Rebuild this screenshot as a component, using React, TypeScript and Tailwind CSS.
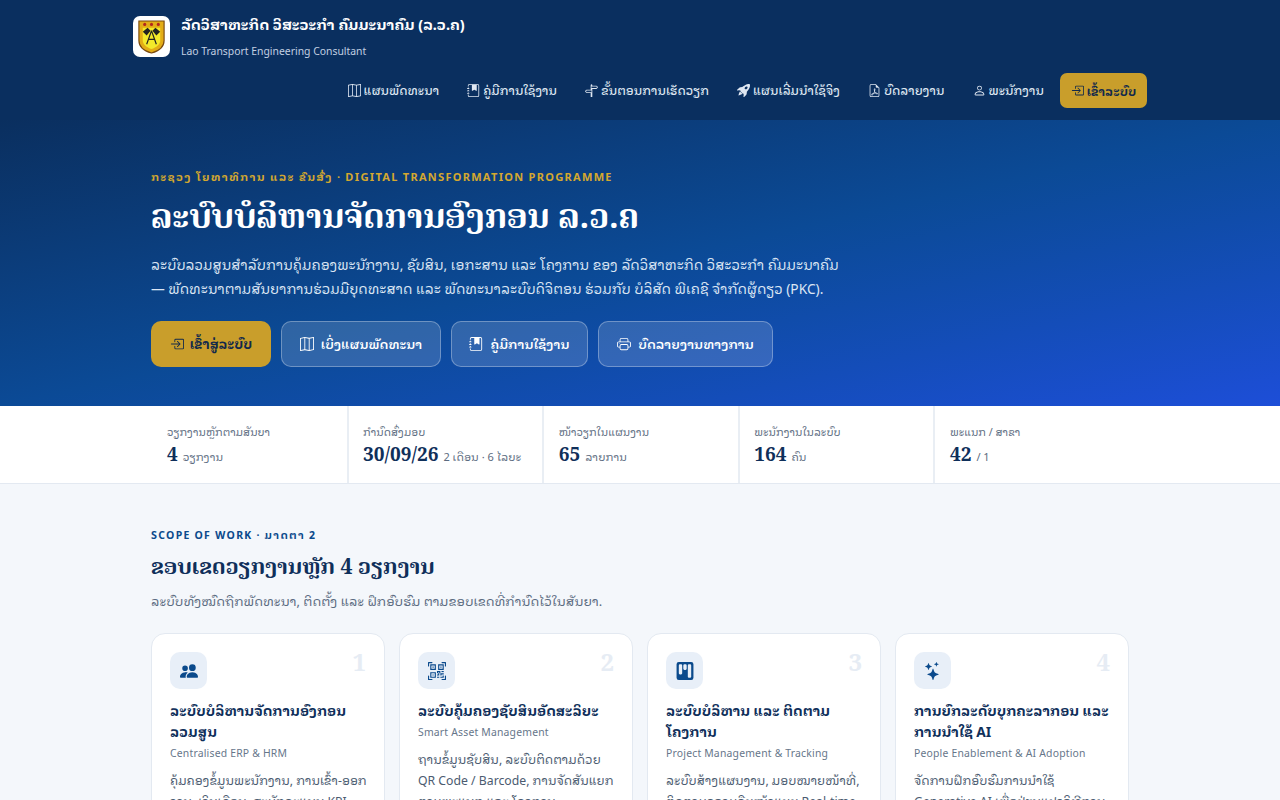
import React from "react";
import {
  BsBoxArrowInRight,
  BsFileEarmarkPdf,
  BsJournalBookmarkFill,
  BsKanbanFill,
  BsMap,
  BsPeopleFill,
  BsPerson,
  BsPrinter,
  BsQrCodeScan,
  BsRocketTakeoffFill,
  BsSignpostSplit,
  BsStars,
} from "react-icons/bs";

const navLinks = [
  { label: "ແຜນພັດທະນາ", icon: BsMap },
  { label: "ຄູ່ມືການໃຊ້ງານ", icon: BsJournalBookmarkFill },
  { label: "ຂັ້ນຕອນການເຮັດວຽກ", icon: BsSignpostSplit },
  { label: "ແຜນເລີ່ມນຳໃຊ້ຈິງ", icon: BsRocketTakeoffFill },
  { label: "ບົດລາຍງານ", icon: BsFileEarmarkPdf },
  { label: "ພະນັກງານ", icon: BsPerson },
];

const heroLinks = [
  { label: "ເບິ່ງແຜນພັດທະນາ", icon: BsMap, width: "w-[160px]" },
  { label: "ຄູ່ມືການໃຊ້ງານ", icon: BsJournalBookmarkFill, width: "w-[137px]" },
  { label: "ບົດລາຍງານທາງການ", icon: BsPrinter, width: "w-[175px]" },
];

const stats = [
  { label: "ວຽກງານຫຼັກຕາມສັນຍາ", value: "4", unit: "ວຽກງານ" },
  { label: "ກຳນົດສົ່ງມອບ", value: "30/09/26", unit: "2 ເດືອນ · 6 ໄລຍະ" },
  { label: "ໜ້າວຽກໃນແຜນງານ", value: "65", unit: "ລາຍການ" },
  { label: "ພະນັກງານໃນລະບົບ", value: "164", unit: "ຄົນ" },
  { label: "ພະແນກ / ສາຂາ", value: "42", unit: "/ 1" },
];

const cards = [
  {
    n: "1",
    icon: BsPeopleFill,
    title: "ລະບົບບໍລິຫານຈັດການອົງກອນ ລວມສູນ",
    sub: "Centralised ERP & HRM",
    text: "ຄຸ້ມຄອງຂໍ້ມູນພະນັກງານ, ການເຂົ້າ-ອອກ\u200Bງານ, ເງິນເດືອນ, ສະມັກຄະແນນ KPI ແລະ ການອະນຸມັດເອກະສານ",
  },
  {
    n: "2",
    icon: BsQrCodeScan,
    title: "ລະບົບຄຸ້ມຄອງຊັບສິນອັດສະລິຍະ",
    sub: "Smart Asset Management",
    text: "ຖານຂໍ້ມູນຊັບສິນ, ລະບົບຕິດຕາມດ້ວຍ QR Code / Barcode, ການຈັດສັນແຍກຕາມພະແນກ ແລະ ໂຄງການ",
  },
  {
    n: "3",
    icon: BsKanbanFill,
    title: "ລະບົບບໍລິຫານ ແລະ ຕິດຕາມ ໂຄງການ",
    sub: "Project Management & Tracking",
    text: "ລະບົບສ້າງແຜນງານ, ມອບໝາຍໜ້າທີ່, ຕິດຕາມຄວາມຄືບໜ້າແບບ Real-time ແລະ ລາຍງານຜົນ",
  },
  {
    n: "4",
    icon: BsStars,
    title: "ການຍົກລະດັບບຸກຄະລາກອນ ແລະ ການນຳໃຊ້ AI",
    sub: "People Enablement & AI Adoption",
    text: "ຈັດການຝຶກອົບຮົມການນຳໃຊ້ Generative AI ເພື່ອປ່ຽນແປງວິທີການເຮັດວຽກຂອງພະນັກງານ",
  },
];

function Logo() {
  return (
    <div className="flex h-[41px] w-[37px] shrink-0 items-center justify-center rounded-[7px] bg-white">
      <svg viewBox="0 0 32 36" className="h-[35px] w-[31px]">
        <path d="M3 2h26v20c0 7-6 11-13 13C9 33 3 29 3 22z" fill="#e3ad16" stroke="#7a4a10" strokeWidth="1.2" />
        <path d="M7 9h18v13c0 4-4 7-9 9-5-2-9-5-9-9z" fill="#f3e92a" />
        <path d="M7 13l5-4 3 3-4 5zM25 13l-5-4-3 3 4 5z" fill="#222" />
        <path d="M16 12l-5 14M16 12l5 14M12.5 21h7" stroke="#222" strokeWidth="1.2" fill="none" />
        <circle cx="9" cy="5.5" r="1.6" fill="#b3261e" />
        <circle cx="16" cy="5.5" r="1.6" fill="#b3261e" />
        <circle cx="23" cy="5.5" r="1.6" fill="#b3261e" />
      </svg>
    </div>
  );
}

export default function App() {
  return (
    <div className="h-[800px] overflow-hidden bg-[#f4f7fb] font-['Noto_Sans_Lao_Looped','Noto_Sans',sans-serif] text-[#0f2f5a]">
      {/* Top bar */}
      <header className="bg-[#0a2f5f]">
        <div className="mx-auto h-[120px] w-[1014px] pt-[14px]">
          <div className="flex items-center gap-[11px]">
            <Logo />
            <div>
              <div className="text-[14.4px] font-bold leading-[20px] text-white">
                ລັດວິສາຫະກິດ ວິສະວະກຳ ຄົມມະນາຄົມ (ລ.ວ.ຄ)
              </div>
              <div className="mt-[9px] text-[10.4px] leading-[16px] text-[#c3d0e2]">
                Lao Transport Engineering Consultant
              </div>
            </div>
          </div>
          <nav className="mt-[14px] flex items-center justify-end">
            {navLinks.map((link) => (
              <a key={link.label} className="ml-[12px] mr-[16px] flex items-center gap-[3px] text-[12.08px] font-medium text-[#dfe7f2]">
                <link.icon className="h-[13px] w-[13px]" />
                {link.label}
              </a>
            ))}
            <button className="flex h-[35px] w-[87px] items-center justify-center gap-[3px] rounded-[7px] bg-[#c99e2b] text-[12px] font-bold text-[#12294b]">
              <BsBoxArrowInRight className="h-[13px] w-[13px]" />
              ເຂົ້າລະບົບ
            </button>
          </nav>
        </div>
      </header>

      {/* Hero */}
      <section className="h-[286px] bg-gradient-to-br from-[#0a2f5f] via-[#0b4a96] to-[#1d4ed8]">
        <div className="mx-auto w-[978px] pt-[47px]">
          <div className="text-[11px] font-bold leading-[18px] tracking-[1.3px] text-[#d4a82f]">
            ກະຊວງ ໂຍທາທິການ ແລະ ຂົນສົ່ງ · DIGITAL TRANSFORMATION PROGRAMME
          </div>
          <h1 className="mt-[9px] font-['Noto_Serif_Lao',serif] text-[32.8px] font-bold leading-[46px] text-white">
            ລະບົບບໍລິຫານຈັດການອົງກອນ ລ.ວ.ຄ
          </h1>
          <p className="mt-[12px] w-[720px] text-[13.76px] leading-[24px] text-[#dce6f4]">
            ລະບົບລວມສູນສຳລັບການຄຸ້ມຄອງພະນັກງານ, ຊັບສິນ, ເອກະສານ ແລະ ໂຄງການ ຂອງ ລັດວິສາຫະກິດ ວິສະວະກຳ ຄົມມະນາຄົມ
            <br />
            — ພັດທະນາຕາມສັນຍາການຮ່ວມມືຍຸດທະສາດ ແລະ ພັດທະນາລະບົບດິຈິຕອນ ຮ່ວມກັບ ບໍລິສັດ ພີເຄຊີ ຈຳກັດຜູ້ດຽວ (PKC).
          </p>
          <div className="mt-[21px] flex gap-[10px]">
            <button className="flex h-[46px] w-[120px] items-center justify-center gap-[6px] rounded-[10px] bg-[#c99e2b] text-[13px] font-bold text-[#12294b]">
              <BsBoxArrowInRight className="h-[14px] w-[14px]" />
              ເຂົ້າສູ່ລະບົບ
            </button>
            {heroLinks.map((link) => (
              <button
                key={link.label}
                className={`flex h-[46px] items-center justify-center gap-[7px] rounded-[10px] border border-white/30 bg-white/15 text-[12.8px] font-semibold text-white ${link.width}`}
              >
                <link.icon className="h-[14px] w-[14px]" />
                {link.label}
              </button>
            ))}
          </div>
        </div>
      </section>

      {/* Stats */}
      <section className="border-b border-[#e3e9f1] bg-white">
        <div className="mx-auto grid h-[77px] w-[978px] grid-cols-5">
          {stats.map((s, i) => (
            <div key={s.label} className={`pr-[14px] pt-[17px] ${i > 0 ? "border-l-2 border-[#e9eef4] pl-[14.5px]" : "pl-[16px]"}`}>
              <div className="text-[10.6px] leading-[18px] text-[#5b6b80]">{s.label}</div>
              <div className="mt-[1px] flex items-baseline gap-[5px] whitespace-nowrap leading-[26px]">
                <span className="font-['Noto_Serif_Lao',serif] text-[19px] font-bold text-[#0f2f5a]">{s.value}</span>
                <span className="text-[11px] text-[#5b6b80]">{s.unit}</span>
              </div>
            </div>
          ))}
        </div>
      </section>

      {/* Scope of work */}
      <section className="mx-auto w-[978px] pt-[42px]">
        <div className="text-[10.5px] font-bold leading-[18px] tracking-[1.3px] text-[#0b4a8c]">
          SCOPE OF WORK · ມາດຕາ 2
        </div>
        <h2 className="mt-[7px] font-['Noto_Serif_Lao',serif] text-[21.3px] font-bold leading-[32px] text-[#0f2f5a]">
          ຂອບເຂດວຽກງານຫຼັກ 4 ວຽກງານ
        </h2>
        <p className="mt-[7px] text-[12.9px] leading-[22px] text-[#5b6b80]">
          ລະບົບທັງໝົດຖືກພັດທະນາ, ຕິດຕັ້ງ ແລະ ຝຶກອົບຮົມ ຕາມຂອບເຂດທີ່ກຳນົດໄວ້ໃນສັນຍາ.
        </p>
        <div className="mt-[21px] grid grid-cols-4 gap-[14px]">
          {cards.map((c) => (
            <div key={c.n} className="relative h-[260px] rounded-[14px] border border-[#e3e9f1] bg-white px-[18px] pt-[18px]">
              <span className="absolute right-[18px] top-[14px] font-['Noto_Serif_Lao',serif] text-[24px] font-bold leading-[30px] text-[#e6ecf4]">
                {c.n}
              </span>
              <div className="flex h-[37px] w-[37px] items-center justify-center rounded-[10px] bg-[#e8eff8] text-[#0b4a8c]">
                <c.icon className="h-[18px] w-[18px]" />
              </div>
              <h3 className="mt-[11px] text-[13.76px] font-bold leading-[21px] text-[#0f2f5a]">{c.title}</h3>
              <div className="mt-[2px] text-[10.4px] leading-[18px] tracking-[0.2px] text-[#66768a]">{c.sub}</div>
              <p className="mr-[-4px] mt-[7px] text-[12.24px] leading-[21px] text-[#4b5b70]">{c.text}</p>
            </div>
          ))}
        </div>
      </section>
    </div>
  );
}
